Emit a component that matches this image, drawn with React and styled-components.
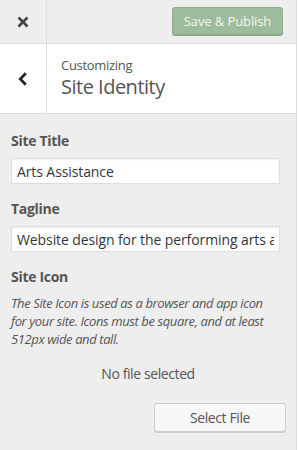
import React from "react";
import styled, { createGlobalStyle } from "styled-components";

const GlobalStyle = createGlobalStyle`
  html, body { margin: 0; padding: 0; background: #fff; }
  body { font-family: "Open Sans", "Noto Sans", sans-serif; }
  * { box-sizing: border-box; }
`;

const Panel = styled.div`
  width: 297px;
  height: 450px;
  background: #eee;
  border-right: 1px solid #ddd;
  display: flex;
  flex-direction: column;
`;

const Header = styled.div`
  height: 44px;
  display: flex;
  align-items: flex-start;
  border-bottom: 1px solid #ddd;
  background: #eee;
`;

const CloseButton = styled.div`
  width: 47px;
  height: 43px;
  border-right: 1px solid #ddd;
  display: flex;
  align-items: center;
  justify-content: center;
  color: #444;
`;

const SaveButton = styled.div`
  margin: 7px 13px 0 auto;
  width: 111px;
  height: 28px;
  border: 1px solid #8eae8e;
  border-radius: 3px;
  background: #9dbb9d;
  color: #f2f7f2;
  font-size: 13px;
  letter-spacing: -0.1px;
  display: flex;
  align-items: center;
  justify-content: center;
  box-shadow: 0 1px 0 #8aa98a;
`;

const SectionHeader = styled.div`
  height: 70px;
  display: flex;
  background: #fff;
  border-bottom: 1px solid #ddd;
`;

const BackButton = styled.div`
  width: 47px;
  height: 69px;
  border-right: 1px solid #ddd;
  display: flex;
  align-items: center;
  justify-content: center;
  color: #23282d;
`;

const Titles = styled.div`
  padding: 12px 0 0 14px;
  color: #555;
`;

const Overline = styled.div`
  font-size: 13px;
  line-height: 18px;
  letter-spacing: -0.3px;
`;

const Title = styled.div`
  font-size: 20px;
  line-height: 24px;
  margin-top: 1px;
  letter-spacing: -0.5px;
`;

const Content = styled.div`
  padding: 17px 16px 0 11px;
  display: flex;
  flex-direction: column;
`;

const Control = styled.div`
  margin-bottom: 15px;
  display: flex;
  flex-direction: column;
`;

const Label = styled.div`
  font-size: 14px;
  line-height: 20px;
  font-weight: 700;
  color: #555;
  margin-bottom: 7px;
  letter-spacing: -0.3px;
`;

const TextInput = styled.input`
  width: 269px;
  height: 26px;
  border: 1px solid #ddd;
  background: #fff;
  box-shadow: inset 0 1px 2px rgba(0, 0, 0, 0.07);
  padding: 0 5px;
  font-family: "Open Sans", "Noto Sans", sans-serif;
  font-size: 14px;
  letter-spacing: -0.1px;
  color: #32373c;
  outline: none;
  margin: 0;
`;

const Description = styled.div`
  font-size: 13px;
  line-height: 18px;
  font-style: italic;
  letter-spacing: -0.4px;
  color: #555;
  margin-left: 0;
`;

const Placeholder = styled.div`
  margin-top: 16px;
  font-size: 14px;
  line-height: 20px;
  letter-spacing: -0.4px;
  color: #555;
  text-align: center;
  padding-left: 5px;
`;

const ButtonRow = styled.div`
  margin-top: 19px;
  margin-right: -6px;
  display: flex;
  justify-content: flex-end;
`;

const FileButton = styled.div`
  width: 132px;
  height: 29px;
  border: 1px solid #ccc;
  border-radius: 3px;
  background: #f7f7f7;
  box-shadow: 0 1px 0 #ccc;
  color: #555;
  font-size: 14px;
  letter-spacing: -0.4px;
  display: flex;
  align-items: center;
  justify-content: center;
`;

const CloseIcon = () => (
  <svg width="12" height="12" viewBox="0 0 12 12" aria-hidden="true">
    <path d="M1.5 1.5 L10.5 10.5 M10.5 1.5 L1.5 10.5" stroke="currentColor" strokeWidth="2.6" strokeLinecap="butt" />
  </svg>
);

const ChevronIcon = () => (
  <svg width="10" height="14" viewBox="0 0 10 14" aria-hidden="true">
    <path d="M7.8 1.3 L2.3 7 L7.8 12.7" fill="none" stroke="currentColor" strokeWidth="2.8" strokeLinejoin="miter" />
  </svg>
);

export default function App() {
  return (
    <>
      <GlobalStyle />
      <Panel>
        <Header>
          <CloseButton>
            <CloseIcon />
          </CloseButton>
          <SaveButton>Save &amp; Publish</SaveButton>
        </Header>
        <SectionHeader>
          <BackButton>
            <ChevronIcon />
          </BackButton>
          <Titles>
            <Overline>Customizing</Overline>
            <Title>Site Identity</Title>
          </Titles>
        </SectionHeader>
        <Content>
          <Control>
            <Label>Site Title</Label>
            <TextInput defaultValue="Arts Assistance" />
          </Control>
          <Control>
            <Label>Tagline</Label>
            <TextInput defaultValue="Website design for the performing arts and more" />
          </Control>
          <Control>
            <Label>Site Icon</Label>
            <Description>
              The Site Icon is used as a browser and app icon for your site. Icons must be square, and at least 512px wide and tall.
            </Description>
            <Placeholder>No file selected</Placeholder>
            <ButtonRow>
              <FileButton>Select File</FileButton>
            </ButtonRow>
          </Control>
        </Content>
      </Panel>
    </>
  );
}
